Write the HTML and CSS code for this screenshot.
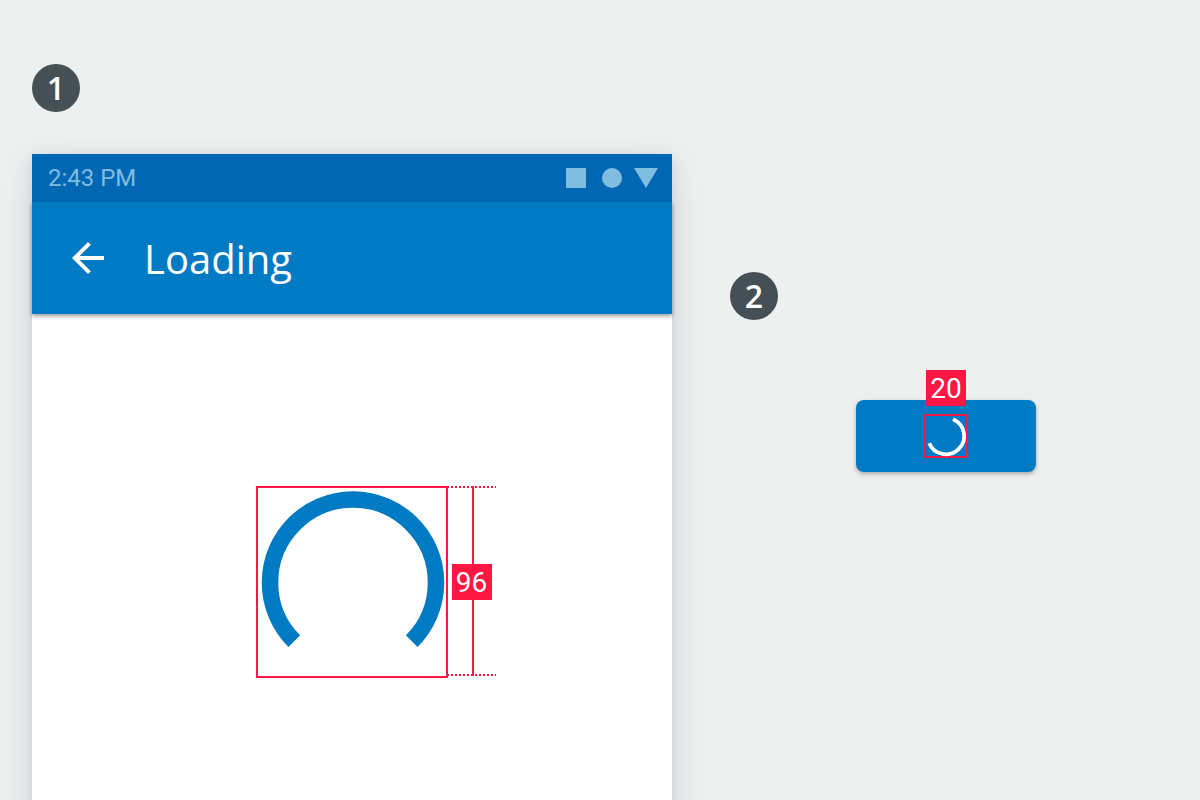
FILE: index.html
```html
<!DOCTYPE html>
<html lang="en">
<head>
<meta charset="utf-8">
<meta name="viewport" content="width=device-width, initial-scale=1">
<title>Loading</title>
<link rel="stylesheet" href="styles.css">
</head>
<body>
<main class="board">
  <section class="example">
    <span class="number">1</span>
    <div class="phone">
      <div class="status">
        <time class="clock">2:43 PM</time>
        <svg class="status-icons" viewBox="0 0 92 20" aria-hidden="true">
          <path d="M0 0h20v20H0z"/>
          <circle cx="46" cy="10" r="10"/>
          <path d="M68 0h24L80 20z"/>
        </svg>
      </div>
      <header class="appbar">
        <button class="back" type="button" aria-label="Back">
          <svg viewBox="0 0 24 24" aria-hidden="true"><path d="M20 11H7.83l5.59-5.59L12 4l-8 8 8 8 1.41-1.41L7.83 13H20v-2z"/></svg>
        </button>
        <h1 class="title">Loading</h1>
      </header>
      <div class="content">
        <div class="frame frame-large">
          <svg class="ring ring-large" viewBox="0 0 192 192" aria-hidden="true">
            <path d="M38.3 155.2A83 83 0 1 1 155.7 155.2"/>
          </svg>
          <div class="measure"><span class="tag">96</span></div>
        </div>
      </div>
    </div>
  </section>
  <section class="example example-small">
    <span class="number">2</span>
    <button class="action" type="button" aria-label="Loading">
      <span class="frame frame-small">
        <svg class="ring ring-small" viewBox="0 0 44 44" aria-hidden="true">
          <path d="M29 5.3A18.2 18.2 0 1 1 5.2 29.2"/>
        </svg>
        <span class="tag tag-above">20</span>
      </span>
    </button>
  </section>
</main>
</body>
</html>
```
FILE: styles.css
```css
* {
  box-sizing: border-box;
}

body {
  margin: 0;
  background: #eef0ef;
  font-family: Roboto, "Liberation Sans", sans-serif;
}

.board {
  display: grid;
  grid-template-columns: 40fr 27fr;
  column-gap: 58px;
  min-height: 100vh;
  padding: 64px 38px 0 32px;
  overflow: hidden;
}

.example {
  display: flex;
  flex-direction: column;
  align-items: flex-start;
  gap: 42px;
}

.example-small {
  gap: 80px;
  padding-top: 208px;
}

.number {
  display: flex;
  align-items: center;
  justify-content: center;
  width: 48px;
  height: 48px;
  border-radius: 50%;
  background: #455056;
  color: #fff;
  font: 600 32px/48px "Open Sans", sans-serif;
}

.phone {
  flex: 1;
  align-self: stretch;
  margin-bottom: -48px;
  background: #fff;
  box-shadow: 0 8px 32px rgba(69, 90, 120, 0.16), 0 4px 12px rgba(69, 90, 120, 0.12);
}

.status {
  position: relative;
  z-index: 1;
  display: flex;
  align-items: center;
  justify-content: space-between;
  height: 48px;
  padding: 0 14px 0 16px;
  background: #0067b3;
  color: #81bce1;
}

.clock {
  font-size: 24px;
  line-height: 48px;
}

.status-icons {
  width: 92px;
  height: 20px;
  fill: currentColor;
}

.appbar {
  display: flex;
  align-items: center;
  gap: 32px;
  height: 112px;
  padding: 0 32px;
  background: #007ac2;
  box-shadow: 0 2px 4px rgba(0, 0, 0, 0.4);
}

.back {
  width: 48px;
  height: 48px;
  padding: 0;
  border: 0;
  background: none;
}

.back svg {
  display: block;
  fill: #fff;
}

.title {
  margin: 0;
  padding-top: 2px;
  color: #fff;
  font: 400 40px/56px "Open Sans", sans-serif;
}

.content {
  display: flex;
  justify-content: center;
  padding: 172px 16px 80px;
}

.frame {
  position: relative;
  display: block;
  border: 2px solid #ff1744;
}

.frame-large {
  width: 192px;
  height: 192px;
}

.frame-small {
  width: 44px;
  height: 44px;
}

.ring {
  display: block;
  margin: -2px;
  fill: none;
}

.ring-large {
  width: 192px;
  height: 192px;
  stroke: #007ac2;
  stroke-width: 16.5;
}

.ring-small {
  width: 44px;
  height: 44px;
  stroke: #fff;
  stroke-width: 3.8;
}

.measure {
  position: absolute;
  top: -2px;
  left: 189px;
  display: flex;
  align-items: center;
  justify-content: center;
  width: 49px;
  height: 190px;
  padding-top: 2px;
  background:
    repeating-linear-gradient(90deg, #ff1744 0 2px, transparent 2px 4px) 0 0 / 100% 2px no-repeat,
    repeating-linear-gradient(90deg, #ff1744 0 2px, transparent 2px 4px) 0 100% / 100% 2px no-repeat,
    linear-gradient(#ff1744, #ff1744) 25px 0 / 2px 100% no-repeat;
}

.tag {
  width: 40px;
  height: 36px;
  background: #ff1744;
  color: #fff;
  font-size: 28px;
  line-height: 38px;
  text-align: center;
}

.tag-above {
  position: absolute;
  bottom: 50px;
  left: 0;
}

.action {
  display: flex;
  align-items: center;
  justify-content: center;
  align-self: center;
  width: 180px;
  height: 72px;
  padding: 0;
  border: 0;
  border-radius: 8px;
  background: #007ac2;
  box-shadow: 0 2px 4px rgba(0, 0, 0, 0.3);
  font-family: inherit;
}
```
